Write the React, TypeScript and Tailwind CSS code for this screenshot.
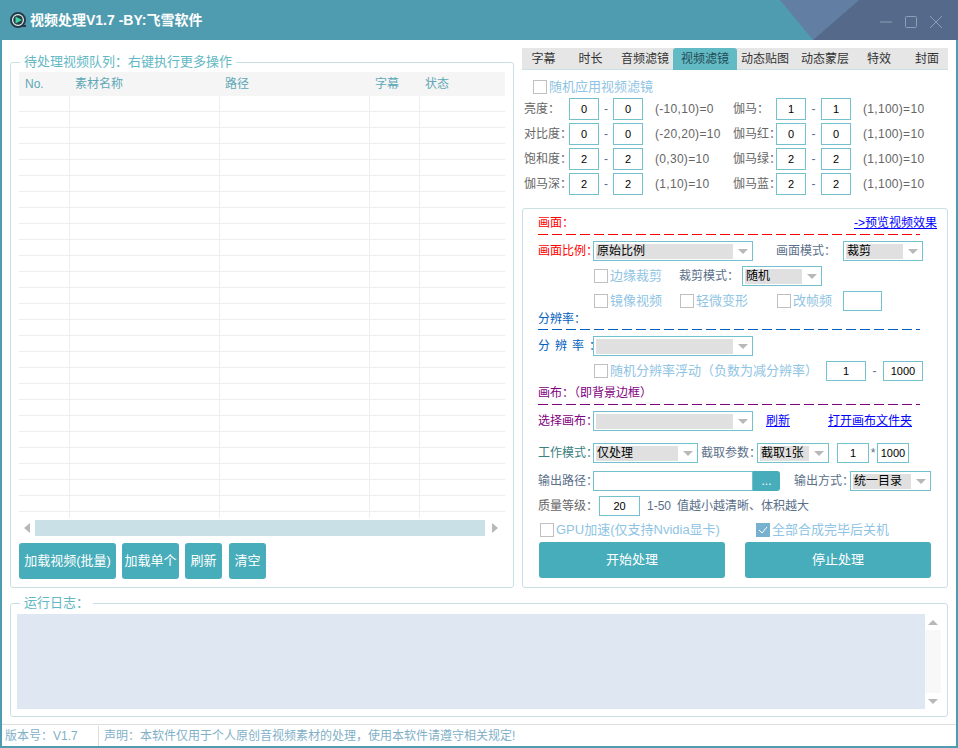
import React from "react";

const SANS = "font-['Liberation_Sans','Noto_Sans_CJK_SC',sans-serif]";

function Arrow({ dir = "down" }: { dir?: "down" | "up" | "left" | "right" }) {
  const pts = {
    down: "0,0 10,0 5,5",
    up: "0,5 10,5 5,0",
    left: "6,0 6,10 0,5",
    right: "0,0 0,10 6,5",
  }[dir];
  const vertical = dir === "down" || dir === "up";
  return (
    <svg width={vertical ? 10 : 6} height={vertical ? 5 : 10} viewBox={vertical ? "0 0 10 5" : "0 0 6 10"} className="shrink-0">
      <polygon points={pts} fill="#b8b8b8" />
    </svg>
  );
}

function Field({ value, className = "" }: { value?: string; className?: string }) {
  return (
    <div className={`flex shrink-0 items-center justify-center border border-[#72c1cc] bg-white text-[11px] text-black ${className}`}>
      {value}
    </div>
  );
}

function Select({ value, className = "" }: { value?: string; className?: string }) {
  return (
    <div className={`flex h-[20px] shrink-0 items-center border border-[#72c1cc] bg-white pl-[2px] ${className}`}>
      <div className="flex h-[15px] min-w-0 flex-1 items-center bg-[#e0e0e0] pl-[1px] text-[12px] leading-[15px] text-black">{value}</div>
      <div className="flex w-[19px] shrink-0 justify-center">
        <Arrow />
      </div>
    </div>
  );
}

function Check({ checked = false }: { checked?: boolean }) {
  return checked ? (
    <div className="flex h-[14px] w-[14px] shrink-0 items-center justify-center bg-[#78b0d0]">
      <svg width="10" height="8" viewBox="0 0 10 8" fill="none">
        <path d="M1 4l3 3 5-6" stroke="#ffffff" strokeWidth="1" />
      </svg>
    </div>
  ) : (
    <div className="h-[14px] w-[14px] shrink-0 border border-[#c0c0c0] bg-white" />
  );
}

function Dash({ className }: { className: string }) {
  return <div className={`h-[1px] w-[382px] ${className}`} />;
}

function Btn({ label, className = "" }: { label: string; className?: string }) {
  return (
    <div className={`flex h-[36px] shrink-0 items-center justify-center whitespace-nowrap rounded-[3px] bg-[#47adba] text-white ${className}`}>
      {label}
    </div>
  );
}

const filterRows = [
  ["亮度：", "0", "(-10,10)=0", "伽马：", "1"],
  ["对比度：", "0", "(-20,20)=10", "伽马红：", "0"],
  ["饱和度：", "2", "(0,30)=10", "伽马绿：", "2"],
  ["伽马深：", "2", "(1,10)=10", "伽马蓝：", "2"],
];

const tabs = [
  ["字幕", "w-[45px] pr-[2px]"],
  ["时长", "w-[47px]"],
  ["音频滤镜", "w-[59px] pl-[3px]"],
  ["视频滤镜", "w-[64px]"],
  ["动态贴图", "w-[58px] pr-[2px]"],
  ["动态蒙层", "w-[60px]"],
  ["特效", "w-[48px]"],
  ["封面", "w-[45px] pl-[3px]"],
];

const headCols = ["w-[50px]", "w-[150px]", "w-[150px]", "w-[50px]", "flex-1"];
const rowCols = ["w-[51px]", "w-[150px]", "w-[150px]", "w-[50px]", "flex-1"];
const heads = ["No.", "素材名称", "路径", "字幕", "状态"];

function App() {
  return (
    <div className={`flex h-[748px] w-[958px] flex-col overflow-hidden bg-[#4f9cb0] ${SANS}`}>
      {/* title bar */}
      <div className="relative flex h-[40px] shrink-0 items-center pl-[10px]">
        <svg width="16" height="16" viewBox="0 0 16 16" className="shrink-0">
          <circle cx="8" cy="8" r="7" fill="#e8f4f0" stroke="#263b48" strokeWidth="2" />
          <circle cx="8" cy="8" r="4.8" fill="#263b48" />
          <polygon points="5.5,4.5 12,8 5.5,11.5" fill="#3fd6a0" />
          <rect x="11" y="13" width="5" height="2" fill="#263b48" />
        </svg>
        <div className="ml-[4px] text-[14px] font-bold text-white">视频处理V1.7 -BY:飞雪软件</div>
        <svg width="178" height="40" viewBox="0 0 178 40" className="absolute right-0 top-0">
          <polygon points="0,0 79,0 33,40" fill="#637ea3" />
          <polygon points="79,0 178,0 178,40 33,40" fill="#55698a" />
          <path d="M100 22h12" stroke="#8f9eb4" strokeWidth="1" />
          <rect x="125.500" y="16.500" width="11" height="11" rx="1" fill="none" stroke="#8f9eb4" />
          <path d="M150 16l12 12M162 16l-12 12" stroke="#8f9eb4" strokeWidth="1" />
        </svg>
      </div>

      {/* body */}
      <div className="mx-[2px] mb-[2px] flex min-h-0 flex-1 flex-col bg-white">
        <div className="flex h-[548px] shrink-0">
          {/* queue */}
          <fieldset className="ml-[8px] mt-[13px] h-[535px] w-[504px] shrink-0 rounded-[3px] border border-[#c8e0e6]">
            <legend className="ml-[9px] px-[4px] text-[13px] leading-[18px] text-[#62b8c4]">待处理视频队列：右键执行更多操作</legend>
            <div className="mx-[8px] mt-[1px] w-[486px]">
              <div className="flex h-[24px] bg-[#f5f5f5] text-[12px] text-[#5ea8b6]">
                {heads.map((h, i) => (
                  <div key={h} className={`flex items-center pl-[6px] ${headCols[i]}`}>
                    {h}
                  </div>
                ))}
              </div>
              {Array.from({ length: 26 }).map((_, r) => (
                <div key={r} className="flex h-[16px] border-b border-[#eeeeee]">
                  {rowCols.map((c, i) => (
                    <div key={i} className={`${c} ${i < 4 ? "border-r border-[#eeeeee]" : ""}`} />
                  ))}
                </div>
              ))}
              <div className="flex h-[6px]">
                {rowCols.map((c, i) => (
                  <div key={i} className={`${c} ${i < 4 ? "border-r border-[#eeeeee]" : ""}`} />
                ))}
              </div>
              <div className="mt-[2px] flex h-[16px] items-center">
                <div className="flex w-[16px] justify-center">
                  <Arrow dir="left" />
                </div>
                <div className="h-[16px] w-[450px] bg-[#c8e0e6]" />
                <div className="flex flex-1 justify-center">
                  <Arrow dir="right" />
                </div>
              </div>
              <div className="mt-[7px] flex text-[13px]">
                <Btn label="加载视频(批量)" className="w-[97px]" />
                <Btn label="加载单个" className="ml-[6px] w-[57px]" />
                <Btn label="刷新" className="ml-[6px] w-[37px]" />
                <Btn label="清空" className="ml-[7px] w-[37px]" />
              </div>
            </div>
          </fieldset>

          {/* right column */}
          <div className="ml-[8px] mt-[8px] w-[426px] shrink-0">
            <div className="flex h-[22px] border-b border-[#c8e0e6] bg-[#e6e6e6] text-[12px] text-[#333333]">
              {tabs.map(([t, w]) => (
                <div
                  key={t}
                  className={`flex h-[22px] shrink-0 items-center justify-center ${w} ${t === "视频滤镜" ? "rounded-t-[3px] bg-[#62bac4] text-[#234c55]" : ""}`}
                >
                  {t}
                </div>
              ))}
            </div>

            <div className="ml-[11px] mt-[10px] flex h-[14px] items-center">
              <Check />
              <span className="ml-[2px] text-[13px] text-[#90c4e4]">随机应用视频滤镜</span>
            </div>

            <div className="mt-[4px] flex flex-col gap-[3px] pl-[2px] text-[12px] text-[#666666]">
              {filterRows.map(([a, v1, range1, b, v2]) => (
                <div key={a} className="flex h-[22px] items-center">
                  <div className="w-[45px] shrink-0 whitespace-nowrap">{a}</div>
                  <Field value={v1} className="h-[22px] w-[30px]" />
                  <div className="w-[14px] text-center text-[#5a6f8a]">-</div>
                  <Field value={v1} className="h-[22px] w-[30px]" />
                  <div className="ml-[12px] w-[78px] shrink-0 whitespace-nowrap text-[12px] tracking-[0.3px]">{range1}</div>
                  <div className="w-[43px] shrink-0 whitespace-nowrap">{b}</div>
                  <Field value={v2} className="h-[22px] w-[30px]" />
                  <div className="w-[15px] text-center text-[#5a6f8a]">-</div>
                  <Field value={v2} className="h-[22px] w-[30px]" />
                  <div className="ml-[12px] whitespace-nowrap text-[12px] tracking-[0.3px]">(1,100)=10</div>
                </div>
              ))}
            </div>

            {/* settings panel */}
            <div className="mt-[13px] flex h-[380px] flex-col rounded-[3px] border border-[#c8e0e6] pl-[15px] text-[12px] text-[#5a6f8a]">
              <div className="mt-[7px] flex h-[14px] items-center justify-between pr-[10px]">
                <span className="text-[#ff0000]">画面：</span>
                <span className="text-[#0000ff] underline">-&gt;预览视频效果</span>
              </div>
              <Dash className="mt-[4px] bg-[repeating-linear-gradient(90deg,#ff0000_0_10px,transparent_10px_14px)]" />

              <div className="mt-[6px] flex h-[20px] items-center">
                <div className="w-[55px] shrink-0 whitespace-nowrap text-[#ff0000]">画面比例：</div>
                <Select value="原始比例" className="w-[160px]" />
                <div className="ml-[23px] w-[67px] shrink-0">画面模式：</div>
                <Select value="裁剪" className="w-[80px]" />
              </div>

              <div className="mt-[5px] flex h-[20px] items-center pl-[56px]">
                <Check />
                <span className="ml-[2px] w-[52px] shrink-0 text-[13px] text-[#90c4e4]">边缘裁剪</span>
                <span className="ml-[17px] w-[63px] shrink-0">裁剪模式：</span>
                <Select value="随机" className="w-[80px]" />
              </div>

              <div className="mt-[5px] flex h-[20px] items-center pl-[56px] text-[13px] text-[#90c4e4]">
                <Check />
                <span className="ml-[2px] w-[52px] shrink-0">镜像视频</span>
                <div className="ml-[18px]">
                  <Check />
                </div>
                <span className="ml-[2px] w-[52px] shrink-0">轻微变形</span>
                <div className="ml-[29px]">
                  <Check />
                </div>
                <span className="ml-[2px] w-[39px] shrink-0">改帧频</span>
                <Field className="ml-[11px] h-[20px] w-[39px]" />
              </div>

              <div className="flex h-[14px] items-center pt-[1px] text-[#0060c0]">分辨率：</div>
              <Dash className="mt-[4px] bg-[repeating-linear-gradient(90deg,#0060c0_0_10px,transparent_10px_14px)]" />

              <div className="mt-[6px] flex h-[20px] items-center">
                <div className="w-[55px] shrink-0 whitespace-nowrap tracking-[5px] text-[#0060c0]">分辨率：</div>
                <Select className="w-[160px]" />
              </div>

              <div className="mt-[5px] flex h-[20px] items-center pl-[56px]">
                <Check />
                <span className="ml-[2px] w-[216px] shrink-0 whitespace-nowrap text-[13px] text-[#90c4e4]">随机分辨率浮动（负数为减分辨率）</span>
                <Field value="1" className="h-[20px] w-[40px]" />
                <div className="w-[17px] text-center">-</div>
                <Field value="1000" className="h-[20px] w-[40px]" />
              </div>

              <div className="mt-[5px] flex h-[14px] items-center text-[#800080]">画布：（即背景边框）</div>
              <Dash className="mt-[4px] bg-[repeating-linear-gradient(90deg,#800080_0_10px,transparent_10px_14px)]" />

              <div className="mt-[6px] flex h-[20px] items-center">
                <div className="w-[55px] shrink-0 whitespace-nowrap text-[#800080]">选择画布：</div>
                <Select className="w-[160px]" />
                <span className="ml-[13px] w-[24px] shrink-0 text-[#0000ff] underline">刷新</span>
                <span className="ml-[38px] whitespace-nowrap text-[#0000ff] underline">打开画布文件夹</span>
              </div>

              <div className="mt-[12px] flex h-[20px] items-center">
                <div className="w-[55px] shrink-0 whitespace-nowrap text-[#3a8080]">工作模式：</div>
                <Select value="仅处理" className="w-[105px]" />
                <div className="ml-[3px] w-[56px] shrink-0 whitespace-nowrap">截取参数：</div>
                <Select value="截取1张" className="w-[72px]" />
                <Field value="1" className="ml-[8px] h-[20px] w-[32px]" />
                <div className="w-[8px] text-center">*</div>
                <Field value="1000" className="h-[20px] w-[32px]" />
              </div>

              <div className="mt-[8px] flex h-[20px] items-center">
                <div className="w-[55px] shrink-0 whitespace-nowrap">输出路径：</div>
                <Field className="h-[20px] w-[160px]" />
                <div className="flex h-[20px] w-[27px] shrink-0 items-center justify-center rounded-r-[3px] bg-[#47adba] text-white">...</div>
                <div className="ml-[14px] w-[56px] shrink-0 whitespace-nowrap">输出方式：</div>
                <Select value="统一目录" className="w-[81px]" />
              </div>

              <div className="mt-[5px] flex h-[20px] items-center">
                <div className="w-[61px] shrink-0 whitespace-nowrap text-[#666666]">质量等级：</div>
                <Field value="20" className="h-[20px] w-[41px]" />
                <div className="ml-[7px] w-[30px] shrink-0 text-[12px]">1-50</div>
                <div className="whitespace-nowrap">值越小越清晰、体积越大</div>
              </div>

              <div className="ml-[2px] mt-[7px] flex h-[14px] items-center text-[13px] text-[#90c4e4]">
                <Check />
                <span className="ml-[2px] w-[200px] shrink-0 whitespace-nowrap">GPU加速(仅支持Nvidia显卡)</span>
                <Check checked />
                <span className="ml-[2px] whitespace-nowrap">全部合成完毕后关机</span>
              </div>

              <div className="ml-[1px] mt-[5px] flex text-[13px]">
                <Btn label="开始处理" className="w-[186px]" />
                <Btn label="停止处理" className="ml-[20px] w-[186px]" />
              </div>
            </div>
          </div>
        </div>

        {/* log */}
        <fieldset className="ml-[8px] mt-[6px] h-[123px] w-[938px] shrink-0 rounded-[3px] border border-[#c8e0e6]">
          <legend className="ml-[9px] px-[4px] text-[13px] leading-[18px] text-[#62b8c4]">运行日志：</legend>
          <div className="ml-[6px] mt-[2px] flex h-[95px]">
            <div className="w-[908px] bg-[#dfe7f2]" />
            <div className="flex w-[16px] flex-col items-center">
              <div className="flex h-[16px] items-center justify-center">
                <Arrow dir="up" />
              </div>
              <div className="h-[63px] w-[16px] bg-[#f8f8f8]" />
              <div className="flex h-[16px] items-center justify-center">
                <Arrow dir="down" />
              </div>
            </div>
          </div>
        </fieldset>

        {/* status */}
        <div className="mt-[7px] flex min-h-0 flex-1 items-stretch border-t border-[#dddddd] text-[12px] text-[#7fb0c8]">
          <div className="mt-[1px] flex w-[97px] shrink-0 items-center border-r border-[#dddddd] pl-[3px]">版本号：V1.7</div>
          <div className="flex items-center pl-[5px]">声明：本软件仅用于个人原创音视频素材的处理，使用本软件请遵守相关规定!</div>
        </div>
      </div>
    </div>
  );
}

export default App;
